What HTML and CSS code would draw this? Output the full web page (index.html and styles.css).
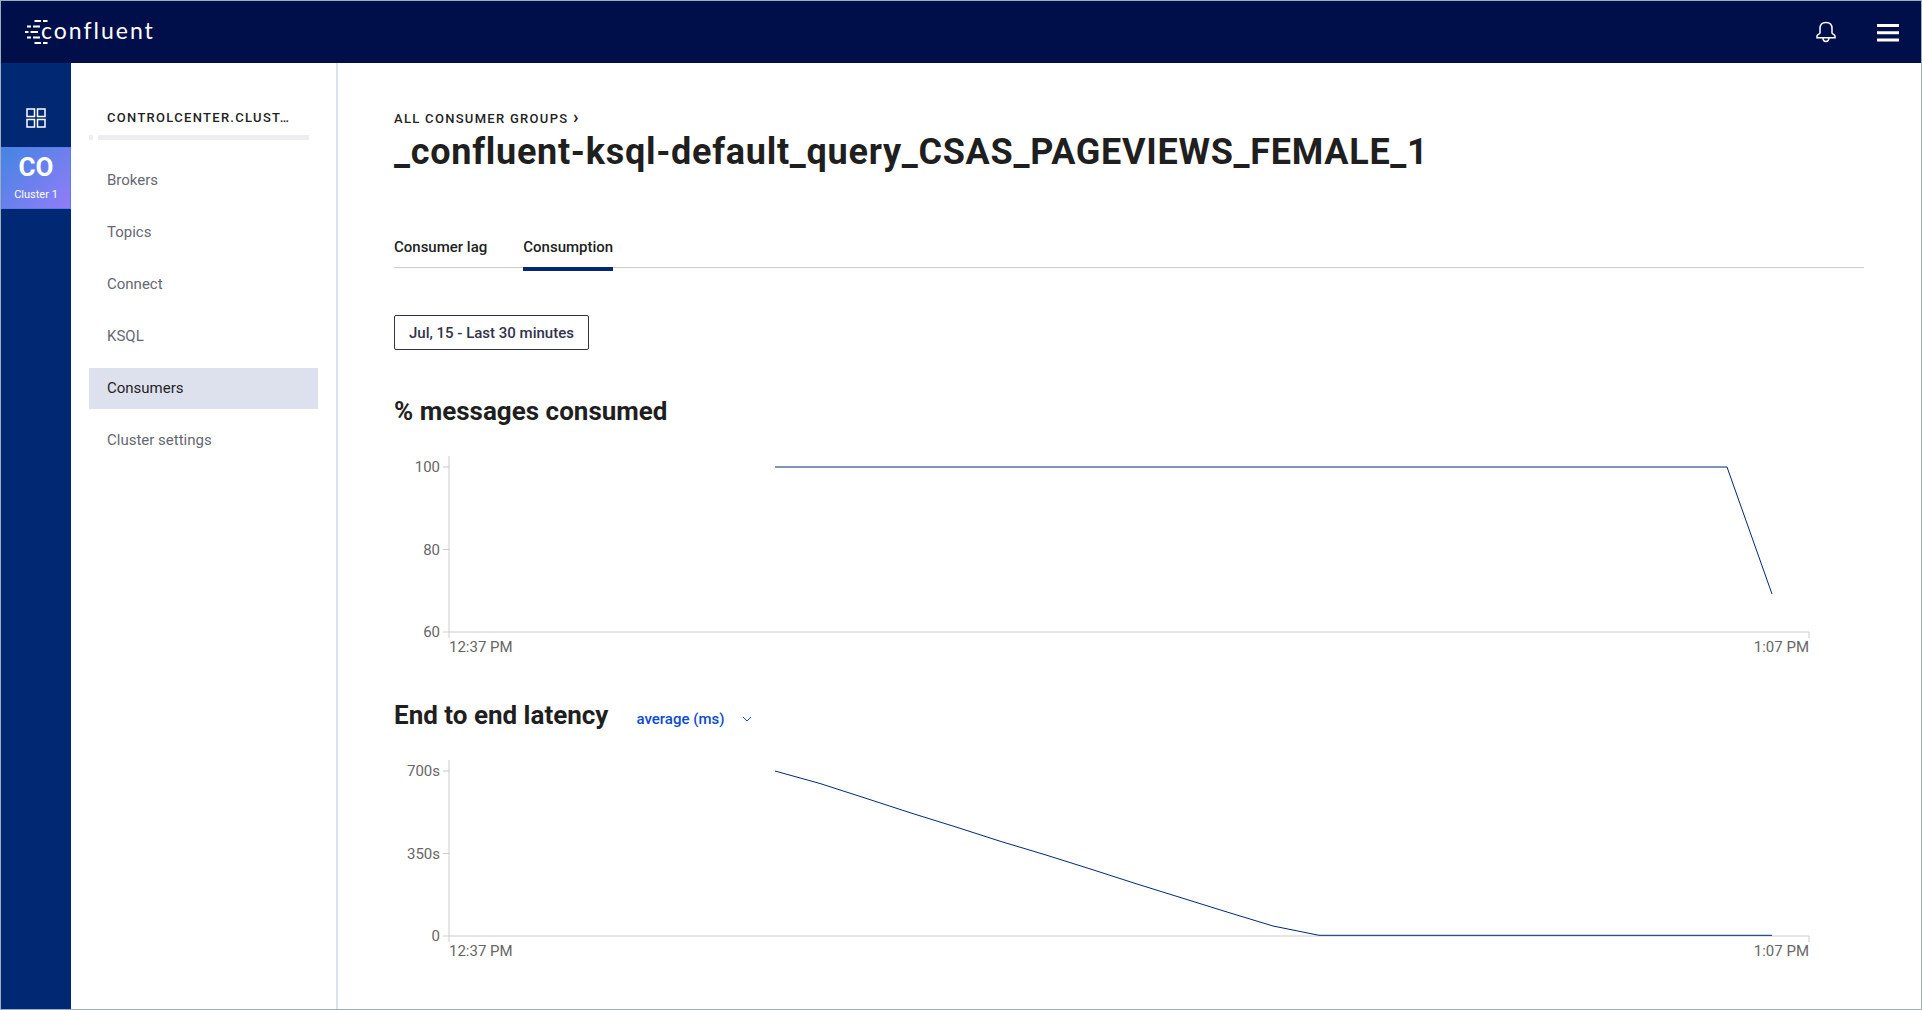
FILE: index.html
```html
<!DOCTYPE html>
<html lang="en">
<head>
<meta charset="utf-8">
<meta name="viewport" content="width=device-width, initial-scale=1">
<title>Consumption - Control Center</title>
<link rel="stylesheet" href="styles.css">
</head>
<body>
<header class="topbar">
  <a class="logo" href="#" aria-label="Confluent home">
    <svg class="logo-mark" width="24" height="26" viewBox="0 0 24 26" aria-hidden="true">
      <path d="M9.500 2H16M18 2h4.500M2 7.500h4M8 7.500h7M0 13h3.500M5.500 13h7.500M2 18.500h4M8 18.500h7M9.500 24H16M18 24h4.500"/>
    </svg>
    <span class="logo-text">confluent</span>
  </a>
  <div class="topbar-actions">
    <button class="icon-button" type="button" aria-label="Notifications">
      <svg width="22" height="22" viewBox="0 0 22 22" aria-hidden="true">
        <path class="thin" d="M5 12V7.500C5 4 7 1.500 11 1.500S17 4 17 7.500V12C17 12.800 20 13.500 20 15V16.800H2V15C2 13.500 5 12.800 5 12ZM8 17a3 3.500 0 0 0 6 0"/>
      </svg>
    </button>
    <button class="icon-button" type="button" aria-label="Menu">
      <svg width="22" height="22" viewBox="0 0 22 22" aria-hidden="true">
        <path class="bar" d="M0 4.500h22M0 11.700h22M0 19h22"/>
      </svg>
    </button>
  </div>
</header>
<div class="shell">
  <nav class="rail" aria-label="Clusters">
    <a class="rail-home" href="#" aria-label="All clusters">
      <svg width="20" height="20" viewBox="0 0 20 20" aria-hidden="true">
        <path class="thin" d="M1 1h7.500v7.500H1zM11.500 1H19v7.500h-7.500zM1 11.500h7.500V19H1zM11.500 11.500H19V19h-7.500z"/>
      </svg>
    </a>
    <a class="cluster" href="#">
      <strong class="cluster-code">CO</strong>
      <span class="cluster-name">Cluster 1</span>
    </a>
  </nav>
  <aside class="sidebar">
    <h2 class="sidebar-title">CONTROLCENTER.CLUST…</h2>
    <div class="health"><span class="health-dot"></span><span class="health-bar"></span></div>
    <nav class="menu" aria-label="Cluster">
      <a class="menu-item" href="#">Brokers</a>
      <a class="menu-item" href="#">Topics</a>
      <a class="menu-item" href="#">Connect</a>
      <a class="menu-item" href="#">KSQL</a>
      <a class="menu-item selected" href="#" aria-current="page">Consumers</a>
      <a class="menu-item" href="#">Cluster settings</a>
    </nav>
  </aside>
  <main class="content">
    <a class="breadcrumb" href="#">ALL CONSUMER GROUPS <span class="crumb-arrow">›</span></a>
    <h1 class="title">_confluent-ksql-default_query_CSAS_PAGEVIEWS_FEMALE_1</h1>
    <nav class="tabs" aria-label="Views">
      <a class="tab" href="#">Consumer lag</a>
      <a class="tab active" href="#" aria-current="page">Consumption</a>
    </nav>
    <button class="range" type="button">Jul, 15 - Last 30 minutes</button>

    <section class="panel">
      <div class="panel-head"><h2 class="panel-title">% messages consumed</h2></div>
      <div class="chart">
        <div class="y-labels"><span>100</span><span>80</span><span>60</span></div>
        <svg class="plot" viewBox="0 0 1360 176" preserveAspectRatio="none" role="img" aria-label="Percent of messages consumed">
          <path class="axis" d="M0 0V182M0 176H1360V182M-6 11H0M-6 93.500H0M-6 176H0"/>
          <path class="series" d="M326 11H1278L1323 138"/>
        </svg>
        <div class="x-labels"><span>12:37 PM</span><span>1:07 PM</span></div>
      </div>
    </section>

    <section class="panel">
      <div class="panel-head">
        <h2 class="panel-title">End to end latency</h2>
        <div class="metric">
          <select class="metric-select" aria-label="Latency metric"><option>average (ms)</option></select>
          <svg class="chevron" width="10" height="6" viewBox="0 0 10 6" aria-hidden="true"><path d="M1 1l4 4 4-4"/></svg>
        </div>
      </div>
      <div class="chart">
        <div class="y-labels"><span>700s</span><span>350s</span><span>0</span></div>
        <svg class="plot" viewBox="0 0 1360 176" preserveAspectRatio="none" role="img" aria-label="End to end latency over time">
          <path class="axis" d="M0 0V182M0 176H1360V182M-6 11H0M-6 93.500H0M-6 176H0"/>
          <path class="series" d="M326 11L371 23.500L416 38L462 53L507 67L552 81.500L597 95L643 109.500L688 124L733 138L778 152L824 166L870 175.300H1323"/>
        </svg>
        <div class="x-labels"><span>12:37 PM</span><span>1:07 PM</span></div>
      </div>
    </section>
  </main>
</div>
</body>
</html>
```
FILE: styles.css
```css
* { box-sizing: border-box; }

body {
  margin: 0;
  min-height: 100vh;
  display: flex;
  flex-direction: column;
  border: 1px solid #9aafb9;
  background: #fff;
  color: #1f1f1f;
  font: 15px/20px Roboto, "Liberation Sans", sans-serif;
}

a { color: inherit; text-decoration: none; }
h1, h2 { margin: 0; }
button { font: inherit; cursor: pointer; }
svg { display: block; fill: none; }

/* Top bar */
.topbar {
  display: flex;
  align-items: center;
  justify-content: space-between;
  height: 62px;
  padding: 0 22px 0 24px;
  background: #000e4a;
  color: #fff;
}
.logo { display: flex; align-items: center; }
.logo-mark { margin-right: -8px; stroke: #fff; stroke-width: 2; }
.logo-text {
  padding-bottom: 4px;
  font: 400 23px/26px Lato, sans-serif;
  letter-spacing: 2px;
}
.topbar-actions { display: flex; gap: 40px; }
.icon-button { padding: 0; border: 0; background: none; }
.thin { stroke: #fff; stroke-width: 1.5; }
.bar { stroke: #fff; stroke-width: 3; }

.shell { display: flex; flex: 1; }

/* Cluster rail */
.rail { width: 70px; flex: none; background: #002873; }
.rail-home { display: flex; justify-content: center; padding: 45px 0 19px; }
.cluster {
  display: flex;
  flex-direction: column;
  align-items: center;
  height: 62px;
  padding-top: 4px;
  border: 1px solid #5a7ee8;
  background: linear-gradient(135deg, #4385e2, #937cf8);
  color: #fff;
}
.cluster-code { font-size: 26px; line-height: 30px; }
.cluster-name { font-size: 11px; line-height: 26px; }

/* Sidebar */
.sidebar {
  width: 267px;
  flex: none;
  padding: 45px 18px 0;
  border-right: 2px solid #dde0ed;
}
.sidebar-title {
  margin-left: 18px;
  font-size: 13px;
  font-weight: 500;
  line-height: 20px;
  letter-spacing: 0.1em;
  white-space: nowrap;
}
.health { display: flex; gap: 5px; height: 5px; margin: 7px 9px 20px 0; }
.health-dot { width: 4px; background: #ededf3; }
.health-bar { flex: 1; background: #ededf3; }
.menu { display: flex; flex-direction: column; gap: 11px; }
.menu-item { padding: 10px 18px 11px; color: #656772; }
.menu-item.selected { background: #dde1ee; color: #1f1f1f; }

/* Main column */
.content { flex: 1; min-width: 0; padding: 45px 57px 30px 56px; }
.breadcrumb {
  display: block;
  font-size: 13px;
  font-weight: 500;
  line-height: 20px;
  letter-spacing: 0.1em;
}
.crumb-arrow { font-size: 18px; font-weight: 700; line-height: 18px; }
.title {
  padding-top: 1px;
  font-size: 36px;
  font-weight: 700;
  line-height: 44px;
  letter-spacing: 0.02em;
}
.tabs {
  display: flex;
  gap: 36px;
  margin-top: 53px;
  border-bottom: 1px solid #ccc;
}
.tab {
  padding: 10px 0;
  margin-bottom: -4px;
  border-bottom: 4px solid transparent;
  font-weight: 500;
}
.tab.active { border-color: #002873; }
.range {
  display: block;
  height: 35px;
  margin: 47px 0 44px;
  padding: 0 14px;
  border: 1px solid #32324a;
  border-radius: 2px;
  background: #fff;
  color: #32324a;
  font-weight: 500;
}

/* Chart panels */
.panel { margin-top: 41px; }
.panel-head { display: flex; align-items: baseline; gap: 28px; padding-bottom: 28px; }
.panel-title { font-size: 26px; font-weight: 700; line-height: 34px; }
.metric { display: flex; align-items: center; gap: 18px; color: #0a4bd0; }
.metric-select {
  appearance: none;
  padding: 0;
  border: 0;
  background: none;
  color: inherit;
  font: inherit;
  font-weight: 500;
}
.chevron { stroke: currentColor; stroke-width: 1; }
.chart {
  display: grid;
  grid-template-columns: 55px 1fr;
  grid-template-rows: 176px auto;
  padding-right: 55px;
  color: #666;
}
.y-labels {
  display: flex;
  flex-direction: column;
  justify-content: space-between;
  height: 186px;
  padding: 1px 9px 0 0;
  text-align: right;
}
.plot { width: 100%; height: 176px; overflow: visible; }
.plot path { vector-effect: non-scaling-stroke; }
.axis { stroke: #ccc; stroke-width: 1; }
.series { stroke: #002873; stroke-width: 1; }
.x-labels {
  grid-column: 2;
  display: flex;
  justify-content: space-between;
  padding-top: 5px;
}
```
